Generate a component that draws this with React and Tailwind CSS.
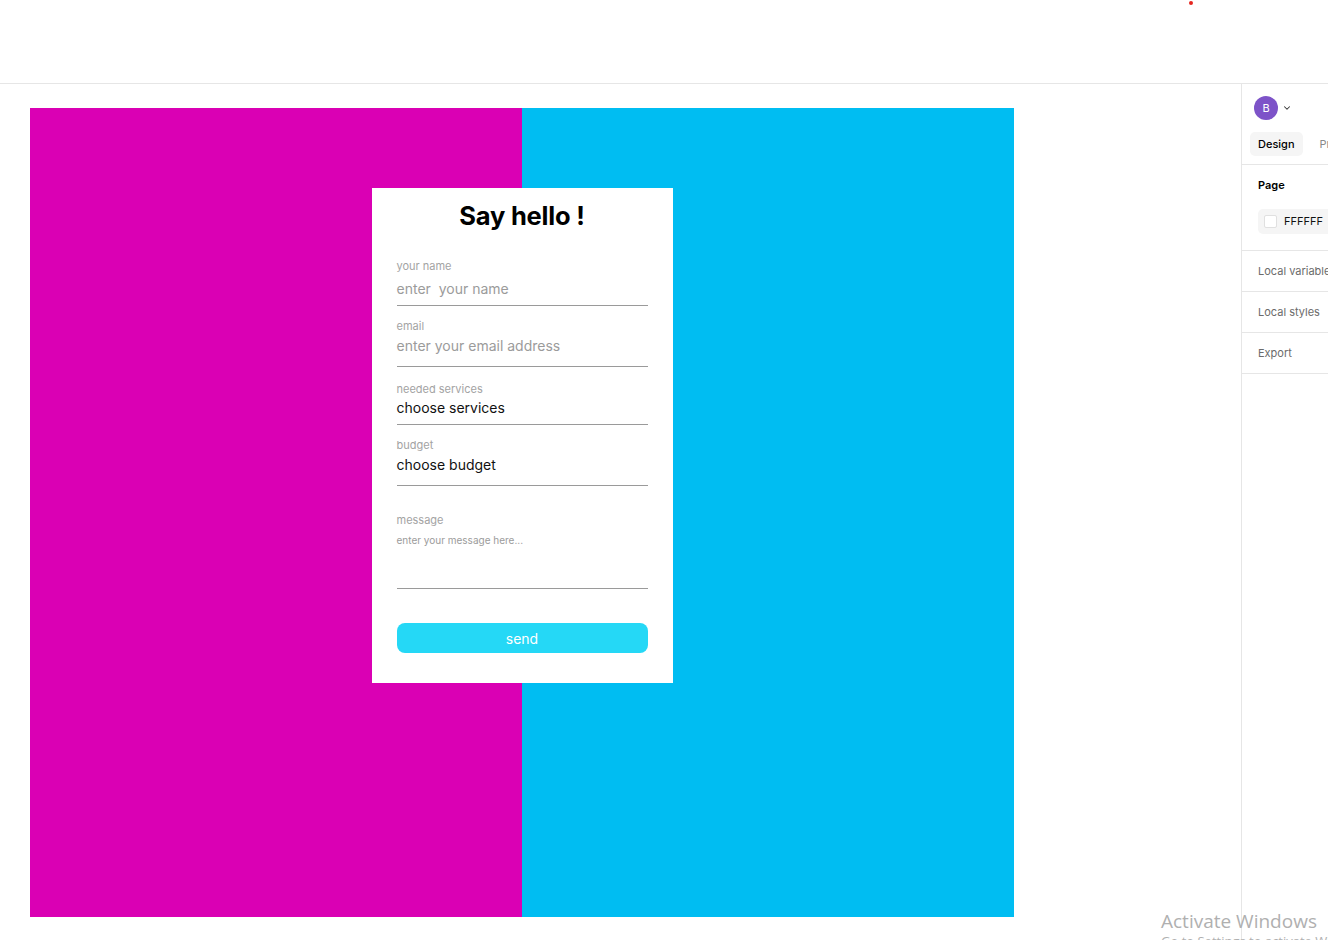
import { ChevronDown } from 'lucide-react';

const fields = [
  { label: 'your name', value: 'enter  your name', muted: true, wrap: 'mt-[27px]', gap: 'mt-[6px]', pb: 'pb-[6px]' },
  { label: 'email', value: 'enter your email address', muted: true, wrap: 'mt-[13px]', gap: 'mt-[3px]', pb: 'pb-[10px]' },
  { label: 'needed services', value: 'choose services', muted: false, wrap: 'mt-[15px]', gap: 'mt-[2px]', pb: 'pb-[6px]' },
  { label: 'budget', value: 'choose budget', muted: false, wrap: 'mt-[13px]', gap: 'mt-[3px]', pb: 'pb-[10px]' },
];

function Field({ field }) {
  return (
    <div className={`${field.wrap} ${field.pb} border-b border-[#9a9a9a]`}>
      <div className="text-[11px] leading-[14px] text-[#a3a3a3]">{field.label}</div>
      <div className={`${field.gap} whitespace-pre text-[14px] leading-[20px] ${field.muted ? 'text-[#9b9b9b]' : 'text-[#111]'}`}>
        {field.value}
      </div>
    </div>
  );
}

function ContactCard() {
  return (
    <div className="w-[301px] bg-white px-[25px] pt-[12px] pb-[30px]">
      <h1 className="text-center text-[25.5px] leading-[32px] font-bold text-black tracking-[-0.2px]">Say hello !</h1>
      {fields.map((f) => <Field key={f.label} field={f} />)}
      <div className="mt-[27px] pb-[41px] border-b border-[#9a9a9a]">
        <div className="text-[11px] leading-[14px] text-[#a3a3a3]">message</div>
        <div className="mt-[6px] text-[10px] leading-[14px] text-[#9b9b9b]">enter your message here...</div>
      </div>
      <button className="mt-[34px] w-full h-[30px] rounded-[8px] bg-[#25d8f6] text-white text-[14px]">send</button>
    </div>
  );
}

function SidePanel() {
  const rows = ['Local variables', 'Local styles', 'Export'];
  return (
    <div className="w-[87px] shrink-0 border-l border-[#e6e6e6] overflow-hidden text-[11px]">
      <div className="flex items-center gap-[4px] pl-[12px] pt-[12px]">
        <div className="w-[24px] h-[24px] rounded-full bg-[#7d53c8] text-white text-[11px] flex items-center justify-center">B</div>
        <ChevronDown size={10} strokeWidth={2.5} className="text-[#333]" />
      </div>
      <div className="flex items-center gap-[17px] pl-[8px] pt-[12px] pb-[8px] border-b border-[#e6e6e6] whitespace-nowrap">
        <div className="px-[8px] h-[24px] leading-[24px] rounded-[5px] bg-[#f5f5f5] font-medium text-black">Design</div>
        <div className="text-[#8a8a8a]">Prototype</div>
      </div>
      <div className="pl-[16px] pt-[13px] pb-[16px] border-b border-[#e6e6e6]">
        <div className="font-semibold text-black leading-[14px]">Page</div>
        <div className="mt-[17px] h-[25px] rounded-l-[5px] bg-[#f5f5f5] flex items-center pl-[6px] gap-[7px]">
          <div className="w-[13px] h-[13px] rounded-[2px] bg-white border border-[#e0e0e0]"></div>
          <span className="text-[#111]">FFFFFF</span>
        </div>
      </div>
      {rows.map((r) => (
        <div key={r} className="h-[41px] flex items-center pl-[16px] border-b border-[#e6e6e6] text-[#6b6b6b] whitespace-nowrap">{r}</div>
      ))}
    </div>
  );
}

export default function App() {
  return (
    <div className="relative w-[1328px] h-[940px] bg-white overflow-hidden flex flex-col" style={{ fontFamily: 'Inter, "Noto Sans", sans-serif' }}>
      <div className="relative h-[84px] shrink-0 border-b border-[#e6e6e6]">
        <div className="absolute left-[1189px] top-[1px] w-[4px] h-[4px] rounded-full bg-[#e5261f]"></div>
      </div>
      <div className="flex-1 flex">
        <div className="flex-1 pl-[30px] pt-[24px]">
          <div className="w-[984px] h-[809px] flex justify-center pt-[80px] bg-[linear-gradient(to_right,#da00b4_50%,#00bdf2_50%)]">
            <div className="h-fit">
              <ContactCard />
            </div>
          </div>
        </div>
        <SidePanel />
      </div>
      <div className="absolute left-[1161px] top-[908px] text-[19px] leading-[26px] text-[#b0b0b0] whitespace-nowrap" style={{ fontFamily: '"Open Sans", sans-serif' }}>
        <div>Activate Windows</div>
        <div className="text-[13px] leading-[14px]">Go to Settings to activate Windows.</div>
      </div>
    </div>
  );
}
